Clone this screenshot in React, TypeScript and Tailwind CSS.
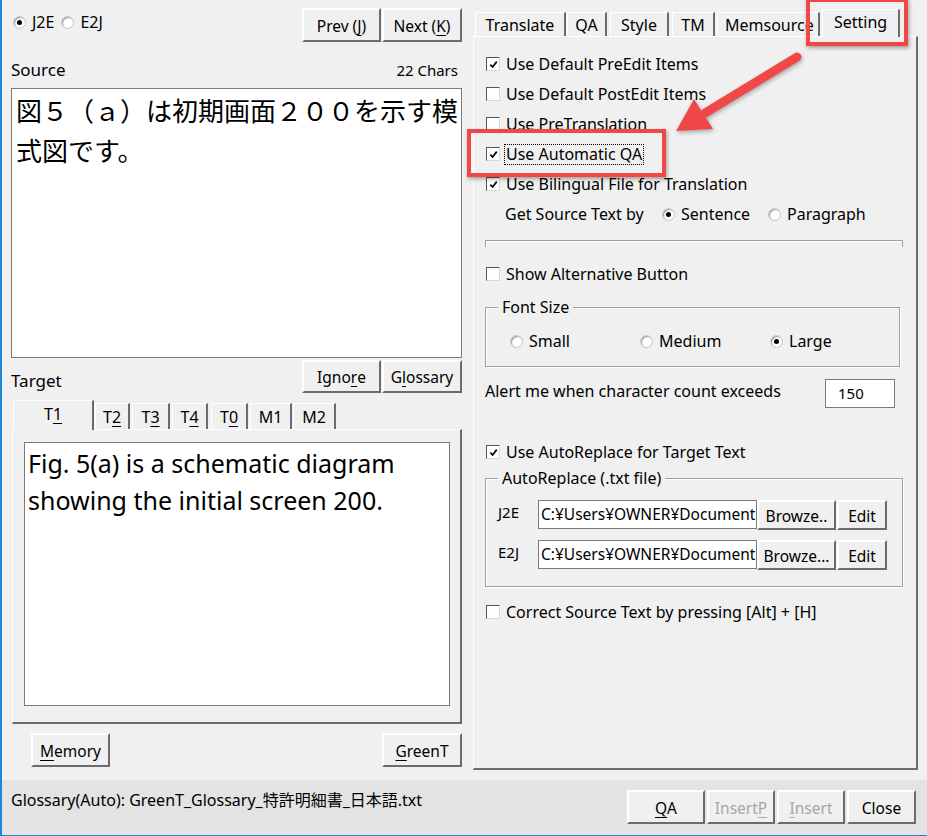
import clsx from "clsx";
import type { ReactNode } from "react";

function U({ children }: { children: ReactNode }) {
  return <span className="underline decoration-1 underline-offset-[3px]">{children}</span>;
}

function Btn({
  children,
  className,
  disabled,
}: {
  children: ReactNode;
  className?: string;
  disabled?: boolean;
}) {
  return (
    <div
      className={clsx(
        "flex shrink-0 items-center justify-center border-2 border-t-white border-l-white border-r-[#6b6b6b] border-b-[#6b6b6b] bg-[#f0f0f0] pt-[3px] text-[15.5px] leading-none",
        disabled ? "text-[#a6a6a6]" : "text-black",
        className
      )}
    >
      {children}
    </div>
  );
}

function Check({
  checked,
  label,
  className,
  focus,
}: {
  checked?: boolean;
  label: string;
  className?: string;
  focus?: boolean;
}) {
  return (
    <div className={clsx("flex h-[30px] items-center", className)}>
      <span className="flex h-[14px] w-[14px] shrink-0 items-center justify-center border border-t-[#555] border-l-[#555] border-b-[#d9d9d9] border-r-[#d9d9d9] bg-white">
        {checked && (
          <svg viewBox="0 0 10 10" className="h-[9px] w-[9px]">
            <path d="M1.5 5.2 L4 7.8 L8.6 1.8" stroke="#000" strokeWidth="1.9" fill="none" />
          </svg>
        )}
      </span>
      <span
        className={clsx(
          "ml-[5px] px-px text-[16px] leading-[19px]",
          focus && "outline-1 outline-dotted outline-black"
        )}
      >
        {label}
      </span>
    </div>
  );
}

function Radio({ on, label, className }: { on?: boolean; label: string; className?: string }) {
  return (
    <div className={clsx("flex items-center", className)}>
      <span className="flex h-[13px] w-[13px] shrink-0 items-center justify-center rounded-full border border-[#c4c4c4] bg-white shadow-[inset_1px_1px_1px_#9a9a9a]">
        {on && <span className="h-[5px] w-[5px] rounded-full bg-black" />}
      </span>
      <span className="ml-[6px] text-[16px]">{label}</span>
    </div>
  );
}

function Group({
  title,
  className,
  children,
}: {
  title?: string;
  className?: string;
  children?: ReactNode;
}) {
  return (
    <div
      className={clsx(
        "relative border border-[#a0a0a0] shadow-[1px_1px_0_#fff,inset_1px_1px_0_#fff]",
        className
      )}
    >
      {title && (
        <span className="absolute top-[-11px] left-[12px] bg-[#f0f0f0] px-[4px] text-[16px] leading-[20px]">
          {title}
        </span>
      )}
      {children}
    </div>
  );
}

function Tab({
  children,
  sel,
  className,
}: {
  children: ReactNode;
  sel?: boolean;
  className?: string;
}) {
  return (
    <div
      className={clsx(
        "flex shrink-0 items-center justify-center border-t border-l border-r-2 border-t-white border-l-white border-r-[#6b6b6b] bg-[#f0f0f0] text-[16px] leading-none",
        sel ? "relative z-10 -mb-px pb-[3px]" : "",
        className
      )}
    >
      {children}
    </div>
  );
}

function LeftColumn() {
  return (
    <div className="flex w-[468px] shrink-0 flex-col pl-[9px] pr-[8px]">
      <div className="mt-[8px] flex h-[34px] justify-between">
        <div className="mt-[4px] ml-[2px] flex h-[20px] items-center">
          <Radio on label="J2E" />
          <Radio label="E2J" className="ml-[7px]" />
        </div>
        <div className="flex gap-[1px]">
          <Btn className="h-[34px] w-[79px]">
            Prev (<U>J</U>)
          </Btn>
          <Btn className="h-[34px] w-[80px]">
            Next (<U>K</U>)
          </Btn>
        </div>
      </div>

      <div className="mt-[18px] flex h-[20px] items-center justify-between">
        <span className="text-[17px]">Source</span>
        <span className="pr-[4px] text-[15px]">22 Chars</span>
      </div>

      <div className="mt-[8px] h-[270px] border border-[#7a7a7a] bg-white pt-px pl-[4px] font-['Noto_Sans_CJK_JP',sans-serif] text-[26px] leading-[40px]">
        図５（ａ）は初期画面２００を示す模式図です。
      </div>

      <div className="mt-[2px] flex h-[33px] items-end justify-between">
        <span className="pb-[1px] text-[17px] leading-[22px]">Target</span>
        <div className="flex h-[33px] gap-[1px]">
          <Btn className="h-[33px] w-[79px]">
            Igno<U>r</U>e
          </Btn>
          <Btn className="h-[33px] w-[80px]">
            G<U>l</U>ossary
          </Btn>
        </div>
      </div>

      <div className="mt-[7px] flex h-[29px] items-end pl-[2px]">
        <Tab sel className="h-[30px] w-[81px]">
          T<U>1</U>
        </Tab>
        <Tab className="ml-px h-[26px] w-[35px]">
          T<U>2</U>
        </Tab>
        <Tab className="ml-[2px] h-[26px] w-[38px]">
          T<U>3</U>
        </Tab>
        <Tab className="ml-[2px] h-[26px] w-[36px]">
          T<U>4</U>
        </Tab>
        <Tab className="ml-[3px] h-[26px] w-[37px]">
          T<U>0</U>
        </Tab>
        <Tab className="ml-[2px] h-[26px] w-[42px]">M1</Tab>
        <Tab className="ml-px h-[26px] w-[43px]">M2</Tab>
      </div>

      <div className="ml-px h-[295px] w-[450px] border-t border-l border-r-2 border-b-2 border-t-white border-l-white border-r-[#6b6b6b] border-b-[#6b6b6b] pt-[12px] pl-[11px]">
        <div className="h-[264px] w-[426px] border border-[#7a7a7a] bg-white pt-[2px] pl-[3px] text-[25px] leading-[37px]">
          Fig. 5(a) is a schematic diagram showing the initial screen 200.
        </div>
      </div>

      <div className="mt-[9px] flex h-[34px] justify-between">
        <Btn className="ml-[20px] h-[34px] w-[79px]">
          <U>M</U>emory
        </Btn>
        <Btn className="h-[34px] w-[80px]">
          <U>G</U>reenT
        </Btn>
      </div>
    </div>
  );
}

function PathRow({ label, path, browse }: { label: string; path: string; browse: string }) {
  return (
    <div className="flex h-[30px] items-start">
      <span className="mt-[1px] ml-[12px] w-[40px] text-[15px]">{label}</span>
      <div className="h-[29px] w-[219px] overflow-hidden border border-[#7a7a7a] bg-white pl-[2px] text-[15.5px] leading-[27px] whitespace-nowrap">
        {path}
      </div>
      <Btn className="h-[30px] w-[79px]">{browse}</Btn>
      <Btn className="ml-px h-[30px] w-[50px]">Edit</Btn>
    </div>
  );
}

function RightColumn() {
  return (
    <div className="flex flex-1 flex-col">
      <div className="flex h-[36px] items-end pl-[5px]">
        <Tab className="h-[24px] w-[91px]">Translate</Tab>
        <Tab className="ml-px h-[24px] w-[40px]">QA</Tab>
        <Tab className="ml-[3px] h-[24px] w-[59px]">Style</Tab>
        <Tab className="ml-[3px] h-[24px] w-[43px]">TM</Tab>
        <Tab className="ml-[2px] h-[24px] w-[103px] justify-start overflow-hidden pl-[7px]">Memsource</Tab>
        <Tab sel className="ml-[2px] h-[28px] w-[78px]">
          Setting
        </Tab>
      </div>

      <div className="ml-[3px] h-[734px] w-[445px] border-t border-l border-r-2 border-b-2 border-t-white border-l-white border-r-[#6b6b6b] border-b-[#6b6b6b] pl-[11px]">
        <div className="mt-[12px] ml-px flex flex-col">
          <Check checked label="Use Default PreEdit Items" />
          <Check label="Use Default PostEdit Items" />
          <Check label="Use PreTranslation" />
          <Check checked focus label="Use Automatic QA" />
          <Check checked label="Use Bilingual File for Translation" />
        </div>
        <div className="ml-[20px] flex h-[30px] items-center text-[16px]">
          <span className="w-[157px]">Get Source Text by</span>
          <Radio on label="Sentence" className="w-[106px]" />
          <Radio label="Paragraph" />
        </div>

        <div className="mt-[11px] h-[7px] w-[418px] border-t border-l border-r border-[#a0a0a0] shadow-[inset_1px_1px_0_#fff]" />

        <Check label="Show Alternative Button" className="mt-[12px] ml-px" />

        <Group title="Font Size" className="mt-[18px] h-[60px] w-[415px]">
          <div className="mt-[23px] flex h-[20px] items-center pl-[24px]">
            <Radio label="Small" className="w-[130px]" />
            <Radio label="Medium" className="w-[130px]" />
            <Radio on label="Large" />
          </div>
        </Group>

        <div className="mt-[12px] flex h-[29px] w-[410px] items-center justify-between">
          <span className="mb-[5px] text-[16px]">Alert me when character count exceeds</span>
          <div className="flex h-[29px] w-[70px] items-center border border-[#7a7a7a] bg-white pl-[12px] text-[15px]">
            150
          </div>
        </div>

        <Check checked label="Use AutoReplace for Target Text" className="mt-[29px] ml-px" />

        <Group title="AutoReplace (.txt file)" className="mt-[11px] h-[109px] w-[418px]">
          <div className="mt-[21px]">
            <PathRow label="J2E" path="C:¥Users¥OWNER¥Document" browse="Browze.." />
          </div>
          <div className="mt-[10px]">
            <PathRow label="E2J" path="C:¥Users¥OWNER¥Document" browse="Browze..." />
          </div>
        </Group>

        <Check label="Correct Source Text by pressing [Alt] + [H]" className="mt-[10px] ml-px" />
      </div>
    </div>
  );
}

function StatusBar() {
  return (
    <div className="flex flex-1 items-start justify-between bg-[#e3e3e3] pr-[11px] pl-[9px]">
      <span className="mt-[8px] text-[16px]">Glossary(Auto): GreenT_Glossary_特許明細書_日本語.txt</span>
      <div className="mt-[10px] flex">
        <Btn className="h-[34px] w-[78px]">
          <U>Q</U>A
        </Btn>
        <Btn disabled className="ml-[2px] h-[34px] w-[68px]">
          Insert<U>P</U>
        </Btn>
        <Btn disabled className="ml-[2px] h-[34px] w-[68px]">
          <U>I</U>nsert
        </Btn>
        <Btn className="ml-[2px] h-[34px] w-[69px]">Close</Btn>
      </div>
    </div>
  );
}

export default function App() {
  return (
    <div className="relative flex h-[836px] w-[927px] flex-col overflow-hidden border-b border-l-2 border-[#1c86d8] bg-[#f0f0f0] font-['Noto_Sans','Noto_Sans_CJK_JP',sans-serif] text-black">
      <div className="flex h-[780px] shrink-0">
        <LeftColumn />
        <RightColumn />
      </div>
      <StatusBar />

      {/* annotation overlays */}
      <div className="pointer-events-none absolute top-[-2px] left-[804px] h-[48px] w-[102px] border-4 border-[#f04848] shadow-[1px_2px_4px_rgba(0,0,0,0.35)]" />
      <div className="pointer-events-none absolute top-[129px] left-[465px] h-[48px] w-[199px] border-4 border-[#f04848] shadow-[1px_2px_4px_rgba(0,0,0,0.35)]" />
      <svg
        className="pointer-events-none absolute top-0 left-[-2px] h-[836px] w-[927px] drop-shadow-[1px_2px_2px_rgba(0,0,0,0.3)]"
        viewBox="0 0 927 836"
      >
        <line x1="797" y1="57" x2="705" y2="113" stroke="#f04848" strokeWidth="9" strokeLinecap="round" />
        <polygon points="676,131 694,99 713,129" fill="#f04848" />
      </svg>
    </div>
  );
}
